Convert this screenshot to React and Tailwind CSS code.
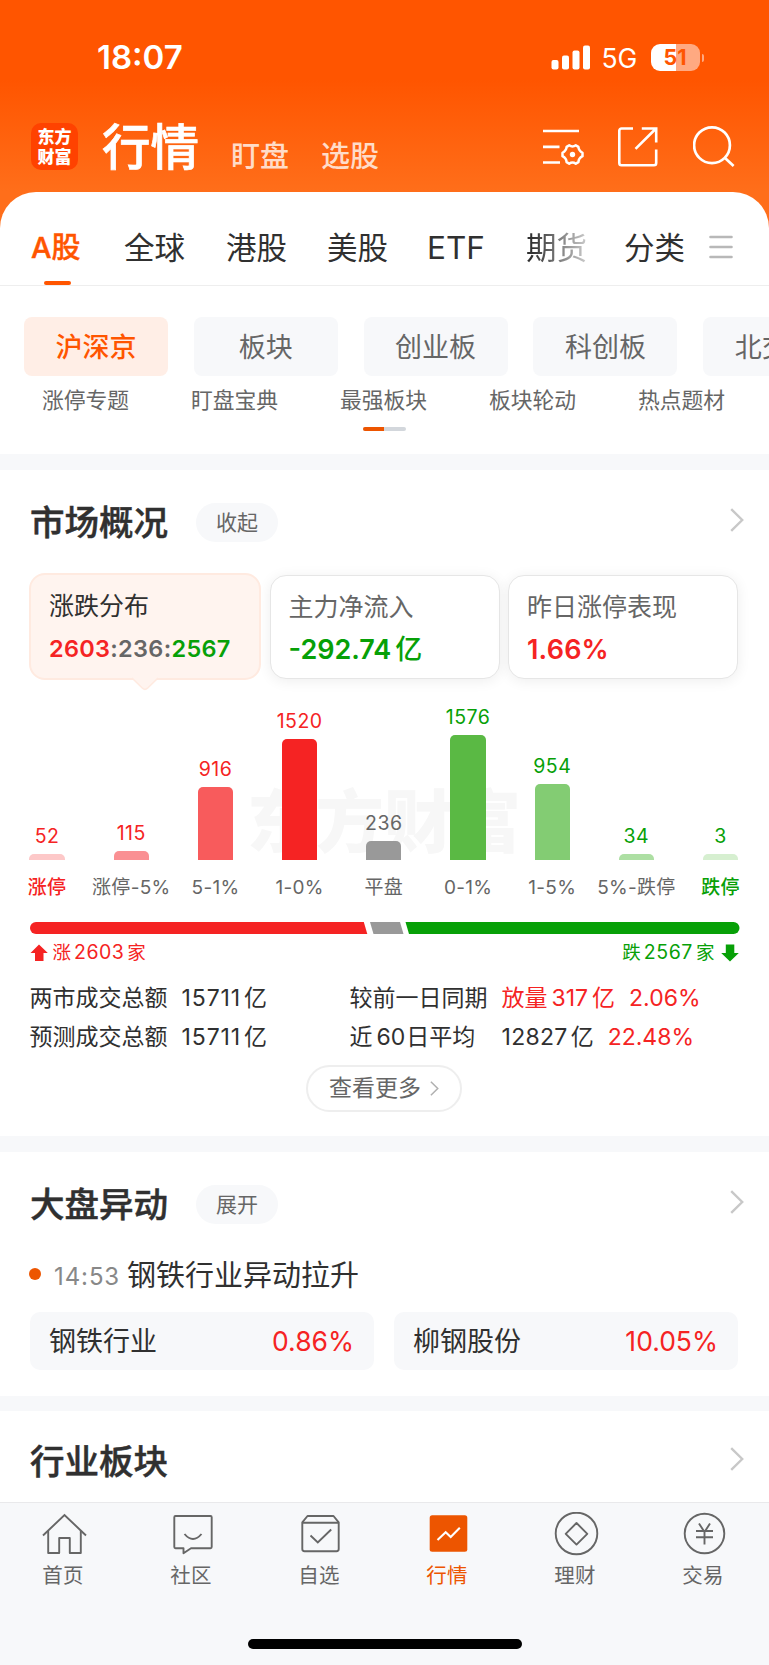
import React from 'react';
import clsx from 'clsx';

const MARKETS = [
    { label: 'A股', width: 'w-[92px]', active: true },
    { label: '全球', width: 'w-[102px]' },
    { label: '港股', width: 'w-[101px]' },
    { label: '美股', width: 'w-[101px]' },
    { label: 'ETF', width: 'w-[98px]', latin: true },
    { label: '期货', width: 'w-[98px]', faded: true },
    { label: '分类', width: 'w-[85px]' },
];

const BOARDS = ['沪深京', '板块', '创业板', '科创板', '北交所'];
const SHORTCUTS = ['涨停专题', '盯盘宝典', '最强板块', '板块轮动', '热点题材'];

const DISTRIBUTION = [
    { label: '涨停', value: 52, height: 6, bar: 'bg-[#fdc8c8]', text: 'text-[#f52323]', edge: 'text-[#f52323]' },
    { label: '涨停-5%', value: 115, height: 9, bar: 'bg-[#fa9093]', text: 'text-[#f52323]' },
    { label: '5-1%', value: 916, height: 73, bar: 'bg-[#f85b5c]', text: 'text-[#f52323]' },
    { label: '1-0%', value: 1520, height: 121, bar: 'bg-[#f52323]', text: 'text-[#f52323]' },
    { label: '平盘', value: 236, height: 19, bar: 'bg-[#999999]', text: 'text-[#666666]' },
    { label: '0-1%', value: 1576, height: 125, bar: 'bg-[#5ab944]', text: 'text-[#07a007]' },
    { label: '1-5%', value: 954, height: 76, bar: 'bg-[#83cc73]', text: 'text-[#07a007]' },
    { label: '5%-跌停', value: 34, height: 6, bar: 'bg-[#addfa3]', text: 'text-[#07a007]' },
    { label: '跌停', value: 3, height: 6, bar: 'bg-[#d6efd0]', text: 'text-[#07a007]', edge: 'text-[#07a007]' },
];

const Chevron = ({ className }) => (
    <svg viewBox="0 0 14 24" fill="none" stroke="currentColor" strokeWidth="2.4" className={className}>
        <path d="M1.2 1.2 12.2 12 1.2 22.8" />
    </svg>
);

const StatusBar = () => (
    <div className="flex h-[115px] items-center pl-[97px] pr-[65px]">
        <span className="pt-px text-[33px] font-semibold">18:07</span>
        <div className="ml-auto flex items-center">
            <svg width="39" height="25" viewBox="0 0 39 25" fill="currentColor">
                <rect x="0.5" y="15" width="7" height="9.5" rx="2" />
                <rect x="11" y="10.5" width="7" height="14" rx="2" />
                <rect x="21.5" y="5.5" width="7" height="19" rx="2" />
                <rect x="32" y="0.5" width="7" height="24" rx="2" />
            </svg>
            <span className="ml-3 w-[37px] pt-[2px] text-[26.5px]">5G</span>
            <div className="relative ml-[12px] flex h-[27px] w-[49px] items-center justify-center overflow-hidden rounded-[9px] bg-[linear-gradient(90deg,#fff_50%,#ffa981_50%)]">
                <span className="text-[21.5px] font-bold text-[#ff5500]">51</span>
            </div>
            <div className="ml-[2px] h-[8px] w-[2.5px] rounded-r-full bg-[#ffa981]" />
        </div>
    </div>
);

const TitleBar = () => (
    <div className="flex h-[77px] pl-[31px] pr-[34px]">
        <div className="mt-2 flex h-[47px] w-[47px] flex-col items-center justify-center rounded-[10px] bg-[#ff4200] text-[17px] font-black leading-[20px]">
            <span>东方</span>
            <span>财富</span>
        </div>
        <h1 className="ml-[24px] mt-[9px] text-[48.5px] font-medium leading-[48px] [-webkit-text-stroke:0.7px_white]">行情</h1>
        <span className="ml-[32px] mt-[27px] text-[29px] font-medium leading-[30px] text-[#ffdcc8]">盯盘</span>
        <span className="ml-[32px] mt-[27px] text-[29px] font-medium leading-[30px] text-[#ffdcc8]">选股</span>
        <div className="ml-auto mt-[10px] flex">
            <svg width="42" height="42" viewBox="0 0 42 42" fill="none" stroke="currentColor" strokeWidth="2.7" className="mr-[32px]">
                <path d="M0 6h36M0 21.8h16.5M0 37.5h17" />
                <path strokeWidth="2.5" strokeLinejoin="round" d="M26.2 20.3Q29.5 22.7 32.8 20.3L35.4 21.8Q35.6 25.7 39.5 27.8V31.2Q35.6 33.2 35.4 37.2L32.8 38.7Q29.5 36.3 26.2 38.7L23.6 37.2Q23.4 33.2 19.5 31.2V27.8Q23.4 25.7 23.6 21.8Z" />
                <circle cx="29.5" cy="29.5" r="2.7" fill="currentColor" stroke="none" />
            </svg>
            <svg width="42" height="42" viewBox="0 0 42 42" fill="none" stroke="currentColor" strokeWidth="2.6" className="mr-[34px]">
                <path d="M16 3.5H4.5a2.2 2.2 0 0 0-2.2 2.2V38a2.2 2.2 0 0 0 2.2 2.2H37a2.2 2.2 0 0 0 2.2-2.2V24.5" />
                <path d="M24.8 3.5H39.2V17.5M38.5 4 18.5 23.8" />
            </svg>
            <svg width="42" height="42" viewBox="0 0 42 42" fill="none" stroke="currentColor" strokeWidth="2.7">
                <circle cx="19" cy="20.2" r="17.9" />
                <path d="M31.5 32.5 40.6 41" />
            </svg>
        </div>
    </div>
);

const SectionHeader = ({ title, action }) => (
    <div className="flex h-[39px] items-center pl-[30px] pr-[25px]">
        <h2 className="pt-px text-[34.5px] font-medium text-[#303030] [-webkit-text-stroke:0.5px_#303030]">{title}</h2>
        {action && (
            <span className="ml-[28px] flex h-[39px] w-[82px] items-center justify-center rounded-full bg-[#f7f8fa] text-[21px] text-[#666666]">
                {action}
            </span>
        )}
        <Chevron className="ml-auto mb-[5px] h-6 w-[14px] text-[#c8c8c8]" />
    </div>
);

const SummaryCards = () => (
    <div className="flex items-center gap-[8.5px] pl-[29px]">
        <div className="relative h-[107px] w-[232px] shrink-0 rounded-2xl border-2 border-[#ffeae0] bg-[#fff4ef] pl-[18px] pt-[16px]">
            <p className="text-[25px] leading-[30px] text-[#303030]">涨跌分布</p>
            <p className="mt-[13px] whitespace-nowrap text-[23.5px] font-semibold leading-[30px] tracking-[0.3px] text-[#666666]">
                <span className="text-[#f52323]">2603</span>:236:<span className="text-[#07a007]">2567</span>
            </p>
            <svg width="28" height="14" viewBox="0 0 28 14" className="absolute left-[100px] top-[102px]">
                <path d="M1 1 11.5 11.2Q14 13.5 16.5 11.2L27 1" fill="#fff4ef" stroke="#ffeae0" strokeWidth="1.6" />
            </svg>
        </div>
        <div className="h-[104px] w-[230px] shrink-0 rounded-2xl border border-[#e6e6e6] bg-white pl-[18px] pt-[16px] shadow-[0_2px_14px_rgba(0,0,0,0.07)]">
            <p className="text-[25px] leading-[30px] text-[#666666]">主力净流入</p>
            <p className="mt-[13px] whitespace-nowrap text-[27px] font-semibold leading-[30px] text-[#07a007]">
                -292.74<span className="ml-1 font-medium">亿</span>
            </p>
        </div>
        <div className="h-[104px] w-[230px] shrink-0 rounded-2xl border border-[#e6e6e6] bg-white pl-[18px] pt-[16px] shadow-[0_2px_14px_rgba(0,0,0,0.07)]">
            <p className="text-[25px] leading-[30px] text-[#666666]">昨日涨停表现</p>
            <p className="mt-[13px] text-[27px] font-semibold leading-[30px] tracking-[0.2px] text-[#f52323]">1.66%</p>
        </div>
    </div>
);

const DistributionChart = () => (
    <div className="relative h-[221px]">
        <div className="absolute left-[247px] top-[106px] whitespace-nowrap text-[68.5px] font-black leading-[80px] text-[#f7f7f7]">
            东方财富
        </div>
        <div className="relative flex h-full pl-[5px] pr-[6px]">
            {DISTRIBUTION.map((item) => (
                <div key={item.label} className="flex w-[84.2px] shrink-0 flex-col items-center justify-end">
                    <span className={clsx('mb-[8px] text-[19.5px] leading-[20px] tracking-[0.5px]', item.text)}>{item.value}</span>
                    <div className={clsx('w-[35.3px] rounded-t-[5px]', item.bar)} style={{ height: item.height }} />
                    <span className={clsx('mt-[18px] whitespace-nowrap text-[19px] leading-[20px] tracking-[0.3px]', item.edge ? `${item.edge} font-medium` : 'text-[#666666]')}>
                        {item.label}
                    </span>
                </div>
            ))}
        </div>
    </div>
);

const RiseFallBar = () => (
    <div className="pl-[29.5px] pt-[24px]">
        <svg width="710" height="12" viewBox="0 0 710 12" className="block">
            <path d="M6 0H333.8L337.3 12H6A6 6 0 0 1 6 0Z" fill="#f52323" />
            <path d="M340 0H370L373.5 12H343.5Z" fill="#999999" />
            <path d="M375.5 0H703.5A6 6 0 0 1 703.5 12H379Z" fill="#07a007" />
        </svg>
        <div className="mt-[8px] flex h-[21px] w-[709px] items-center justify-between text-[19.5px]">
            <span className="flex items-center text-[#f52323]">
                <svg width="18" height="18" viewBox="0 0 18 18" fill="currentColor" className="mr-[5px]">
                    <path d="M9 0.5 17.8 9H13.5V17H5V9H0.5Z" />
                </svg>
                <span className="text-[18.5px]">涨</span>
                <span className="ml-[3px] mr-[3px] tracking-[0.5px]">2603</span>
                <span className="text-[18.5px]">家</span>
            </span>
            <span className="flex items-center text-[#07a007]">
                <span className="text-[18.5px]">跌</span>
                <span className="ml-[3px] mr-[3px] tracking-[0.6px]">2567</span>
                <span className="text-[18.5px]">家</span>
                <svg width="18" height="18" viewBox="0 0 18 18" fill="currentColor" className="ml-[6px]">
                    <path d="M9 17.5 17.8 9H13.3V0.5H4.8V9H0.2Z" />
                </svg>
            </span>
        </div>
    </div>
);

const Turnover = () => (
    <div className="grid grid-cols-[152px_168px_152px_1fr] whitespace-nowrap pl-[29.5px] pt-[16px] text-[23px] leading-[39px] text-[#303030]">
        <span>两市成交总额</span>
        <span><span className="tracking-[0.9px]">15711</span><span className="ml-[3px]">亿</span></span>
        <span>较前一日同期</span>
        <span className="text-[#f52323]">放量<span className="mx-[4px]">317</span>亿<span className="ml-[14px]">2.06%</span></span>
        <span>预测成交总额</span>
        <span><span className="tracking-[0.9px]">15711</span><span className="ml-[3px]">亿</span></span>
        <span>近<span className="ml-[4px] mr-[1px]">60</span>日平均</span>
        <span><span className="tracking-[0.3px]">12827</span><span className="ml-[3px]">亿</span><span className="ml-[14px] text-[#f52323]">22.48%</span></span>
    </div>
);

const MarketOverview = () => (
    <section className="h-[666px] bg-white pt-[33px]">
        <SectionHeader title="市场概况" action="收起" />
        <div className="mt-[31px]">
            <SummaryCards />
        </div>
        <div className="mt-[-3px]">
            <DistributionChart />
        </div>
        <RiseFallBar />
        <Turnover />
        <button className="ml-[306px] mt-[8px] flex h-[47px] w-[156px] items-center justify-center rounded-full border-2 border-[#eeeeee] text-[23px] text-[#666666]">
            查看更多
            <Chevron className="ml-[9px] h-[15px] w-[9px] text-[#b0b0b0]" />
        </button>
    </section>
);

const Mover = ({ name, change }) => (
    <div className="flex h-[58px] flex-1 items-center justify-between rounded-[10px] bg-[#f7f8fa] pl-[19px] pr-[20px] pt-[2px]">
        <span className="text-[27px] text-[#303030]">{name}</span>
        <span className="text-[26.5px] text-[#f52323]">{change}</span>
    </div>
);

const MarketMoves = () => (
    <section className="h-[244px] bg-white pt-[33px]">
        <SectionHeader title="大盘异动" action="展开" />
        <div className="mt-[34px] flex h-[34px] items-center pl-[29px]">
            <span className="mb-[3px] h-3 w-3 rounded-full bg-[#ed5500]" />
            <span className="ml-[13px] mt-[3px] w-[73px] text-[24px] tracking-[0.9px] text-[#888888]">14:53</span>
            <span className="pt-[2px] text-[29px] text-[#303030]">钢铁行业异动拉升</span>
        </div>
        <div className="mt-[20px] flex gap-5 pl-[30px] pr-[31px]">
            <Mover name="钢铁行业" change="0.86%" />
            <Mover name="柳钢股份" change="10.05%" />
        </div>
    </section>
);

const NAV_ITEMS = [
    {
        label: '首页',
        icon: (
            <>
                <path d="M1 23.5 22.5 3 44 23.5" />
                <path d="M6.2 19V41H17.2V26H27.8V41H38.8V19" strokeLinejoin="round" />
            </>
        ),
    },
    {
        label: '社区',
        icon: (
            <>
                <path d="M5.5 4H40.5Q41.7 4 41.7 5.2V35Q41.7 36.2 40.5 36.2H21L13.5 41.2V36.2H5.5Q4.3 36.2 4.3 35V5.2Q4.3 4 5.5 4Z" strokeLinejoin="round" />
                <path d="M14.5 22Q23 32 31.5 22" />
            </>
        ),
    },
    {
        label: '自选',
        icon: (
            <>
                <path d="M4.3 10.3 9.5 4H35.5L40.7 10.3V37Q40.7 39.2 38.5 39.2H6.5Q4.3 39.2 4.3 37Z" strokeLinejoin="round" />
                <path d="M4.3 10.8H40.7M12.5 23.5 19.8 30.5 33.2 17.5" />
            </>
        ),
    },
    {
        label: '行情',
        active: true,
        icon: (
            <>
                <rect x="3.7" y="3.2" width="37.6" height="36.6" rx="2.5" fill="#ed5500" stroke="none" />
                <path d="M11.5 28 19.7 20.3 24.7 25 33.8 15.8" stroke="white" strokeWidth="2.1" />
            </>
        ),
    },
    {
        label: '理财',
        icon: (
            <>
                <circle cx="22.5" cy="21.5" r="20.8" />
                <path d="M22.5 11 33.3 21.8 22.5 32.6 11.7 21.8Z" strokeLinejoin="round" />
            </>
        ),
    },
    {
        label: '交易',
        icon: (
            <>
                <circle cx="22.5" cy="21.5" r="19.8" />
                <path d="M17 11.5 22.5 20 28 11.5M14 19H31M14 25.3H31M22.5 19V32.5" />
            </>
        ),
    },
];

const BottomNav = () => (
    <nav className="h-[163px] border-t-[1.5px] border-[#e9e9eb] bg-[#f7f8fa] text-[#666666]">
        <div className="flex">
            {NAV_ITEMS.map((item) => (
                <div key={item.label} className={clsx('flex w-[128px] shrink-0 flex-col items-center pt-[9px]', item.active && 'text-[#ed5500]')}>
                    <svg width="45" height="45" viewBox="0 0 45 45" fill="none" stroke="currentColor" strokeWidth="1.9">
                        {item.icon}
                    </svg>
                    <span className="mr-[2px] mt-[6px] text-[20.5px] leading-[26px] tracking-[0.3px]">{item.label}</span>
                </div>
            ))}
        </div>
        <div className="ml-[247.5px] mt-[50px] h-[10px] w-[274px] rounded-full bg-black" />
    </nav>
);

export default function App() {
    return (
        <div className="h-[1665px] w-[769px] overflow-hidden bg-[#f7f8fa] font-[Inter,'Noto_Sans_CJK_SC',sans-serif]">
            <header className="h-[240px] bg-[linear-gradient(180deg,#ff5500_80px,#ff6e1a_191px)] text-white">
                <StatusBar />
                <TitleBar />
            </header>

            <div className="relative mt-[-48px] h-[262px] rounded-t-[36px] bg-white">
                <div className="flex h-[94px] items-center border-b border-[#eeeeee] pl-[32px] pt-[16px] text-[30.5px] text-[#303030]">
                    {MARKETS.map((m) => (
                        <div key={m.label} className={clsx('relative flex h-[77px] shrink-0 items-center whitespace-nowrap pt-[2px]', m.width)}>
                            <span
                                className={clsx(
                                    m.active && '-ml-px text-[29px] font-medium text-[#ff5500] [-webkit-text-stroke:0.4px_#ff5500]',
                                    m.faded && 'bg-[linear-gradient(90deg,#303030_10%,#c4c4c4_95%)] bg-clip-text text-transparent',
                                    m.latin && '-ml-px text-[31.5px]'
                                )}
                            >
                                {m.label}
                            </span>
                            {m.active && <span className="absolute bottom-0 left-[12px] h-1 w-[27px] rounded-sm bg-[#ff5500]" />}
                        </div>
                    ))}
                    <svg width="24" height="24" viewBox="0 0 24 24" stroke="#b8b8b8" strokeWidth="2.6" strokeLinecap="round">
                        <path d="M1.5 2h21M1.5 12h21M1.5 22h21" />
                    </svg>
                </div>

                <div className="flex gap-[25.8px] overflow-hidden pl-[24px] pt-[31px]">
                    {BOARDS.map((name, i) => (
                        <div
                            key={name}
                            className={clsx(
                                'flex h-[59px] w-[144px] shrink-0 items-center justify-center rounded-lg pt-[4px] text-[27px]',
                                i === 0 ? 'bg-[#ffeee6] font-medium text-[#ff5500]' : 'bg-[#f7f8fa] text-[#666666]'
                            )}
                        >
                            {name}
                        </div>
                    ))}
                </div>

                <div className="mt-[10px] flex pl-[11px] text-[21.8px] leading-[28px] text-[#666666]">
                    {SHORTCUTS.map((name) => (
                        <span key={name} className="w-[149px] shrink-0 text-center">{name}</span>
                    ))}
                </div>
                <div className="mx-auto mt-[13px] h-1 w-[43px] overflow-hidden rounded-full bg-[#d3d7dc]">
                    <div className="h-full w-[21px] bg-[#ed5500]" />
                </div>
            </div>

            <div className="h-4" />
            <MarketOverview />
            <div className="h-4" />
            <MarketMoves />
            <div className="h-[15px]" />
            <section className="h-[91px] bg-white pt-[31px]">
                <SectionHeader title="行业板块" />
            </section>
            <BottomNav />
        </div>
    );
}
